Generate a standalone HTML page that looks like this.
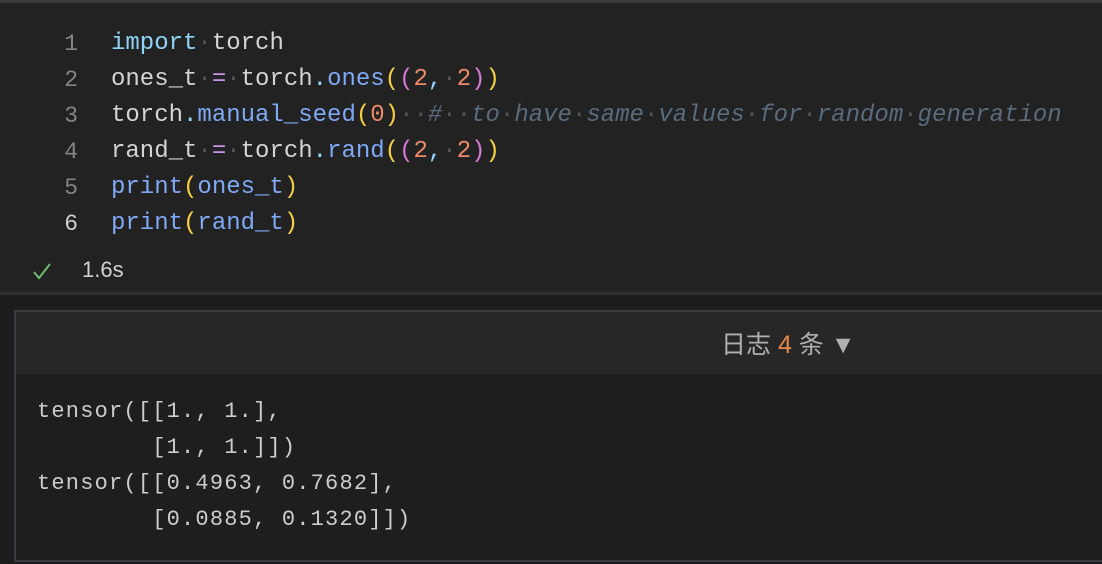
<!DOCTYPE html>
<html><head><meta charset="utf-8"><style>
html,body{margin:0;padding:0;}
body{width:1102px;height:564px;background:#222222;position:relative;overflow:hidden;font-family:"Liberation Mono",monospace;}
.top{position:absolute;left:0;top:0;width:1102px;height:3px;background:#3a3a3d;}
.code{position:absolute;left:0;top:26px;}
.ln{position:absolute;left:40px;width:38px;text-align:right;color:#858585;font-size:23px;line-height:36px;}
.line{position:absolute;left:111px;white-space:pre;font-size:24px;line-height:36px;letter-spacing:0px;color:#d4d4d4;}
.kw{color:#8fd3f5}.fn{color:#7fa8f5}.y{color:#f5cf40}.p{color:#d17bd6}.n{color:#ec8b66}.op{color:#c792ea}.d{color:#555}.c{color:#5a6b7b;font-style:italic}
.sep{position:absolute;left:0;top:292px;width:1102px;height:3px;background:#2e2e31;}
.below{position:absolute;left:0;top:295px;width:1102px;height:269px;background:#1c1c1c;}
.box{position:absolute;left:14px;top:310px;width:1090px;height:248px;border:2px solid #3a3a40;border-right:none;background:#1e1e1e;}
.hdr{position:absolute;left:0;top:0;width:100%;height:62px;background:#272727;}
.hdr span.t{position:absolute;left:705px;top:13px;font-family:"Liberation Sans","Noto Sans CJK SC",sans-serif;font-size:25px;color:#b0b0b0;white-space:pre;}
.out{position:absolute;left:21px;top:82px;white-space:pre;font-size:22px;line-height:36px;letter-spacing:1.2px;color:#cccccc;}
</style></head><body>
<div class="top"></div>
<div class="code">
<div class="ln" style="top:0">1</div><div class="ln" style="top:36px">2</div><div class="ln" style="top:72px">3</div><div class="ln" style="top:108px">4</div><div class="ln" style="top:144px">5</div><div class="ln" style="top:180px;color:#cfcfcf">6</div>
<div class="line" style="top:0"><span class="kw">import</span><span class="d">·</span>torch</div>
<div class="line" style="top:36px">ones_t<span class="d">·</span><span class="op">=</span><span class="d">·</span>torch<span class="kw">.</span><span class="fn">ones</span><span class="y">(</span><span class="p">(</span><span class="n">2</span><span class="kw">,</span><span class="d">·</span><span class="n">2</span><span class="p">)</span><span class="y">)</span></div>
<div class="line" style="top:72px">torch<span class="kw">.</span><span class="fn">manual_seed</span><span class="y">(</span><span class="n">0</span><span class="y">)</span><span class="d">··</span><span class="c">#</span><span class="d">··</span><span class="c">to</span><span class="d">·</span><span class="c">have</span><span class="d">·</span><span class="c">same</span><span class="d">·</span><span class="c">values</span><span class="d">·</span><span class="c">for</span><span class="d">·</span><span class="c">random</span><span class="d">·</span><span class="c">generation</span></div>
<div class="line" style="top:108px">rand_t<span class="d">·</span><span class="op">=</span><span class="d">·</span>torch<span class="kw">.</span><span class="fn">rand</span><span class="y">(</span><span class="p">(</span><span class="n">2</span><span class="kw">,</span><span class="d">·</span><span class="n">2</span><span class="p">)</span><span class="y">)</span></div>
<div class="line" style="top:144px"><span class="fn">print</span><span class="y">(</span><span class="fn">ones_t</span><span class="y">)</span></div>
<div class="line" style="top:180px"><span class="fn">print</span><span class="y">(</span><span class="fn">rand_t</span><span class="y">)</span></div>
</div>
<svg style="position:absolute;left:32px;top:261px" width="20" height="20" viewBox="0 0 20 20"><path d="M2 11 L7 17 L18 3" fill="none" stroke="#6dbb6d" stroke-width="2"/></svg>
<div style="position:absolute;left:82px;top:257px;font-family:'Liberation Sans',sans-serif;font-size:22px;color:#d0d0d0;">1.6s</div>
<div class="sep"></div>
<div class="below"></div>
<div class="box">
<div class="hdr"><span class="t">日志 <span style="color:#e8874a">4</span> 条 ▼</span></div>
<div class="out">tensor([[1., 1.],
        [1., 1.]])
tensor([[0.4963, 0.7682],
        [0.0885, 0.1320]])</div>
</div>
</body></html>
